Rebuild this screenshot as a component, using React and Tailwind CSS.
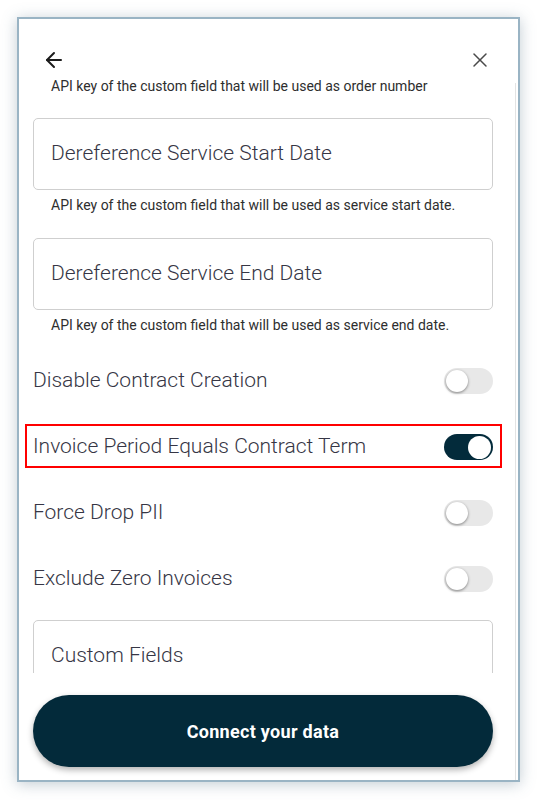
import { ArrowLeft, X } from 'lucide-react';

// Text field look-alike (outlined)
function Field({ label }) {
  return (
    <div className="h-[72px] w-full rounded-[5px] border border-[#cfcfcf] flex items-center pl-[17px]">
      <span className="text-[21px] font-light text-[#363645]">{label}</span>
    </div>
  );
}

function Helper({ children }) {
  return <p className="h-[18px] leading-[18px] pl-[18px] text-[14px] text-[#2e2e2e]">{children}</p>;
}

function Toggle({ on = false }) {
  return on ? (
    <div className="w-[49px] h-[26px] rounded-full bg-[#032b3b] flex items-center justify-end pr-[2px]">
      <div className="w-[23px] h-[23px] rounded-full bg-white" />
    </div>
  ) : (
    <div className="w-[49px] h-[26px] rounded-full bg-[#e8e8e8] flex items-center pl-[2px]">
      <div className="w-[22px] h-[22px] rounded-full bg-white shadow-[0_1px_3px_rgba(0,0,0,0.45)]" />
    </div>
  );
}

function SwitchRow({ label, on, highlighted }) {
  return (
    <div className="relative h-[66px] flex items-center justify-between">
      {highlighted && (
        <div className="absolute left-[-8px] right-[-9px] top-[10px] h-[44px] border-2 border-[#ff0000]" />
      )}
      <span className="text-[21px] font-light text-[#363645]">{label}</span>
      <Toggle on={on} />
    </div>
  );
}

export default function App() {
  return (
    <div className="w-[538px] h-[800px] bg-white p-[17px] font-['Roboto',sans-serif]">
      <div className="h-[765px] w-[503px] border-2 border-[#9ab4c4] bg-white flex flex-col shadow-[0_2px_14px_rgba(80,110,130,0.35)]">
        {/* header */}
        <div className="h-[58px] flex justify-between items-start pt-[29px] pl-[23px] pr-[26px] text-[#1c1c1c]">
          <ArrowLeft size={24} strokeWidth={2} />
          <X size={24} strokeWidth={1.5} className="text-[#4a4a4a]" />
        </div>

        {/* scrolling body */}
        <div className="relative h-[596px] overflow-hidden">
          <div className="absolute right-[2px] top-[6px] bottom-0 w-px bg-[#e3e3e3]" />
          <div className="pl-[14px] w-[474px]">
            <Helper>API key of the custom field that will be used as order number</Helper>
            <div className="mt-[23px]">
              <Field label="Dereference Service Start Date" />
            </div>
            <div className="mt-[6px]">
              <Helper>API key of the custom field that will be used as service start date.</Helper>
            </div>
            <div className="mt-[24px]">
              <Field label="Dereference Service End Date" />
            </div>
            <div className="mt-[6px]">
              <Helper>API key of the custom field that will be used as service end date.</Helper>
            </div>
            <div className="mt-[14px]">
              <SwitchRow label="Disable Contract Creation" />
              <SwitchRow label="Invoice Period Equals Contract Term" on highlighted />
              <SwitchRow label="Force Drop PII" />
              <SwitchRow label="Exclude Zero Invoices" />
            </div>
            <div className="mt-[8px]">
              <Field label="Custom Fields" />
            </div>
          </div>
        </div>

        {/* footer */}
        <div className="relative flex-1 pl-[14px] pt-[22px]">
          <div className="absolute right-[2px] top-0 bottom-0 w-px bg-[#e3e3e3]" />
          <button className="w-[460px] h-[72px] rounded-full bg-[#032a3a] text-white text-[18px] font-bold tracking-[0.3px] shadow-[0_3px_6px_rgba(0,0,0,0.3)]">
            Connect your data
          </button>
        </div>
      </div>
    </div>
  );
}
